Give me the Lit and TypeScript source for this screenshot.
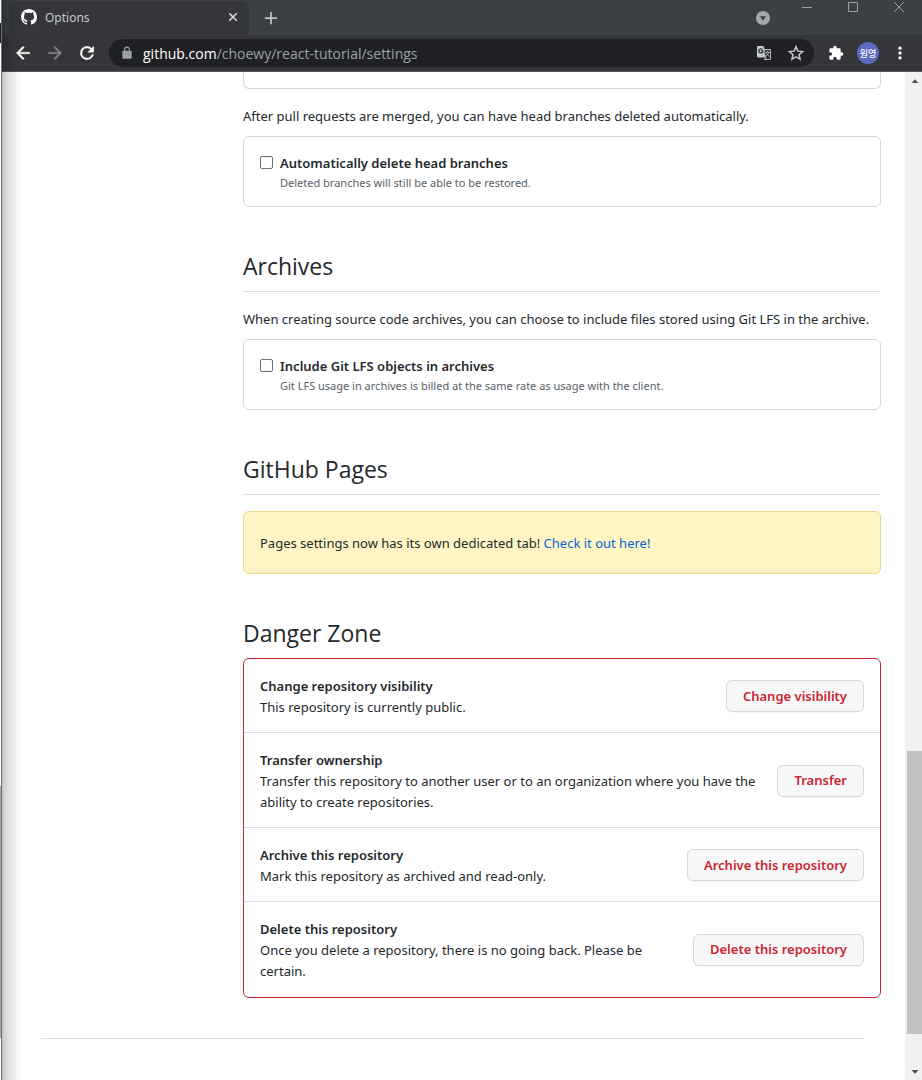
import { LitElement, html, css, svg } from "lit";
import { customElement, property } from "lit/decorators.js";

const icons = {
  github: svg`<path d="M8 0C3.58 0 0 3.58 0 8c0 3.54 2.29 6.53 5.47 7.59.4.07.55-.17.55-.38 0-.19-.01-.82-.01-1.49-2.01.37-2.53-.49-2.69-.94-.09-.23-.48-.94-.82-1.13-.28-.15-.68-.52-.01-.53.63-.01 1.08.58 1.23.82.72 1.21 1.87.87 2.33.66.07-.52.28-.87.51-1.07-1.78-.2-3.64-.89-3.64-3.95 0-.87.31-1.59.82-2.15-.08-.2-.36-1.02.08-2.12 0 0 .67-.21 2.2.82.64-.18 1.32-.27 2-.27s1.36.09 2 .27c1.53-1.04 2.2-.82 2.2-.82.44 1.1.16 1.92.08 2.12.51.56.82 1.27.82 2.15 0 3.07-1.87 3.75-3.65 3.95.29.25.54.73.54 1.48 0 1.07-.01 1.93-.01 2.2 0 .21.15.46.55.38A8.01 8.01 0 0 0 16 8c0-4.42-3.58-8-8-8z"/>`,
  back: svg`<path d="M20 11H7.83l5.59-5.59L12 4l-8 8 8 8 1.41-1.41L7.83 13H20z" stroke="currentColor" stroke-width=".5"/>`,
  forward: svg`<path d="M12 4l-1.41 1.41L16.17 11H4v2h12.17l-5.58 5.59L12 20l8-8z" stroke="currentColor" stroke-width=".5"/>`,
  reload: svg`<path d="M17.65 6.35A7.96 7.96 0 0 0 12 4a8 8 0 1 0 7.73 10h-2.08A6 6 0 1 1 12 6c1.66 0 3.14.69 4.22 1.78L13 11h7V4z" stroke="currentColor" stroke-width=".5"/>`,
  lock: svg`<path d="M18 8h-1V6A5 5 0 0 0 7 6v2H6a2 2 0 0 0-2 2v10c0 1.100.9 2 2 2h12a2 2 0 0 0 2-2V10a2 2 0 0 0-2-2zM8.900 8V6a3.100 3.100 0 0 1 6.200 0v2z"/>`,
  star: svg`<path d="M12 3.600l2.500 5.900 6.300.5-4.800 4.200 1.500 6.200-5.500-3.300-5.500 3.300L8 14.200 3.200 10l6.300-.5z" fill="none" stroke="currentColor" stroke-width="2"/>`,
  puzzle: svg`<path d="M20.500 11H19V7a2 2 0 0 0-2-2h-4V3.500a2.500 2.500 0 0 0-5 0V5H4a2 2 0 0 0-2 2v3.800h1.500a2.700 2.700 0 0 1 0 5.400H2V20a2 2 0 0 0 2 2h3.800v-1.500a2.700 2.700 0 0 1 5.400 0V22H17a2 2 0 0 0 2-2v-4h1.500a2.500 2.500 0 0 0 0-5z"/>`,
  menu: svg`<circle cx="8" cy="2.500" r="1.900"/><circle cx="8" cy="8" r="1.900"/><circle cx="8" cy="13.500" r="1.900"/>`,
  translate: svg`<path d="M1.500 1h6l1.200 3.500 2 8H2a1 1 0 0 1-1-1V2z"/><path d="M8.500 4.500h5.900v9.900H8.300l2.400-2.200" fill="none" stroke="currentColor"/><path d="M7.200 5.700H4.900M7 5.800A2.100 2.100 0 1 1 6.300 4.300" fill="none" stroke="#202124" stroke-width="1.100"/><path d="M8.700 6.500l1.800 6" fill="none" stroke="#202124" stroke-width=".8"/><path d="M9.300 7h4.200M11.400 6v1M12.900 7c-.4 1.700-1.400 2.900-2.700 3.800M10.300 8l2.800 3.600" fill="none" stroke="currentColor" stroke-width=".9"/>`,
  cross: svg`<path d="M3 3l10 10M13 3L3 13" fill="none" stroke="currentColor" stroke-width="2.200"/>`,
  plus: svg`<path d="M8 1v14M1 8h14" fill="none" stroke="currentColor" stroke-width="2"/>`,
  chevron: svg`<circle cx="8" cy="8" r="8"/><path d="M4.500 6h7L8 11z" fill="#3c4043"/>`,
  minimize: svg`<path d="M3 7.500h10" fill="none" stroke="currentColor"/>`,
  maximize: svg`<path d="M3.500 2.500h9v9h-9z" fill="none" stroke="currentColor"/>`,
  close: svg`<path d="M3 2l10 10M13 2L3 12" fill="none" stroke="currentColor"/>`,
  up: svg`<path d="M4.500 10h7L8 6.200z"/>`,
  down: svg`<path d="M4.500 6h7L8 9.800z"/>`,
};

const icon = (name: keyof typeof icons, size = 16, box = 16) =>
  html`<svg width=${size} height=${size} viewBox="0 0 ${box} ${box}" fill="currentColor" aria-hidden="true">${icons[name]}</svg>`;

const reset = css`
  * { box-sizing: border-box; }
  svg { display: block; flex: none; }
  button { font: inherit; color: inherit; margin: 0; padding: 0; border: 0; background: none; }
`;

@customElement("browser-chrome")
export class BrowserChrome extends LitElement {
  static styles = [reset, css`
    :host { display: block; background: #35363a; border-bottom: 1px solid #58585d; color: #fff; }
    .strip { display: flex; height: 35px; padding-left: 7px; background: #3c4043; color: #9aa0a6; }
    .tab { display: flex; align-items: center; width: 240px; margin-top: 1px; padding: 0 10px 2px 12px; gap: 8px; border-radius: 8px 8px 0 0; background: #35363a; color: #fff; }
    .name { flex: 1; font-size: 12px; color: #c4c7cb; }
    .tab button { color: #d5d7da; }
    .new { display: grid; place-items: center; width: 44px; color: #bdc1c6; }
    .spacer { flex: 1; }
    .search { display: grid; place-items: center; width: 42px; color: #a5a9ad; }
    .controls { display: flex; height: 15px; }
    .controls button { display: grid; place-items: center; width: 46px; }
    .toolbar { display: flex; align-items: center; height: 36px; padding: 0 6px 0 5px; }
    .tool { display: grid; place-items: center; flex: none; width: 32px; height: 28px; }
    .dim { color: #808286; }
    .omnibox { display: flex; align-items: center; flex: 1; min-width: 0; height: 28px; margin: 0 6px; padding: 0 2px 0 11px; gap: 9px; border-radius: 14px; background: #202124; color: #c4c7cb; }
    .lock { color: #9aa0a6; }
    .url { flex: 1; min-width: 0; overflow: hidden; white-space: nowrap; font-family: "Open Sans", sans-serif; font-size: 14px; color: #9aa0a6; }
    .host { color: #fff; }
    .actions { display: flex; }
    .avatar { display: grid; place-items: center; width: 22px; height: 22px; border-radius: 50%; background: #5c6bc0; font: 500 9px/1 "Noto Sans CJK KR", sans-serif; }
  `];

  render() {
    return html`
      <div class="strip">
        <div class="tab">
          ${icon("github")}
          <span class="name">Options</span>
          <button aria-label="Close tab">${icon("cross", 12)}</button>
        </div>
        <button class="new" aria-label="New tab">${icon("plus", 14)}</button>
        <span class="spacer"></span>
        <button class="search" aria-label="Search tabs">${icon("chevron", 14)}</button>
        <div class="controls">
          <button aria-label="Minimize">${icon("minimize")}</button>
          <button aria-label="Maximize">${icon("maximize")}</button>
          <button aria-label="Close">${icon("close")}</button>
        </div>
      </div>
      <div class="toolbar">
        <button class="tool" aria-label="Back">${icon("back", 20, 24)}</button>
        <button class="tool dim" aria-label="Forward">${icon("forward", 20, 24)}</button>
        <button class="tool" aria-label="Reload">${icon("reload", 20, 24)}</button>
        <div class="omnibox">
          <span class="lock">${icon("lock", 14, 24)}</span>
          <div class="url" role="textbox" contenteditable="true" spellcheck="false" aria-label="Address"><span class="host">github.com</span>/choewy/react-tutorial/settings</div>
          <div class="actions">
            <button class="tool" aria-label="Translate">${icon("translate")}</button>
            <button class="tool" aria-label="Bookmark">${icon("star", 18, 24)}</button>
          </div>
        </div>
        <button class="tool" aria-label="Extensions">${icon("puzzle", 16, 24)}</button>
        <button class="tool" aria-label="Profile"><span class="avatar">원영</span></button>
        <button class="tool" aria-label="Menu">${icon("menu", 14)}</button>
      </div>`;
  }
}

@customElement("option-box")
export class OptionBox extends LitElement {
  @property() name = "";
  @property() note = "";

  static styles = [reset, css`
    :host { display: flex; gap: 7px; padding: 16px 16px 14px; border: 1px solid #d0d7de; border-radius: 6px; }
    .check { appearance: none; flex: none; width: 13px; height: 13px; margin: 3px 0 0; border: 1px solid #6e6e6e; border-radius: 2px; background: #fff; }
    .check:checked { background: #0366d6; }
    .label { display: block; line-height: 21px; font-weight: 600; }
    .note { margin: 0; font-size: 11px; line-height: 18px; color: #586069; }
  `];

  render() {
    return html`
      <input class="check" id="option" type="checkbox" aria-describedby="note">
      <div>
        <label class="label" for="option">${this.name}</label>
        <p class="note" id="note">${this.note}</p>
      </div>`;
  }
}

const actions = [
  { title: "Change repository visibility", text: "This repository is currently public.", button: "Change visibility" },
  { title: "Transfer ownership", text: "Transfer this repository to another user or to an organization where you have the ability to create repositories.", button: "Transfer" },
  { title: "Archive this repository", text: "Mark this repository as archived and read-only.", button: "Archive this repository" },
  { title: "Delete this repository", text: "Once you delete a repository, there is no going back. Please be certain.", button: "Delete this repository" },
];

@customElement("danger-zone")
export class DangerZone extends LitElement {
  static styles = [reset, css`
    :host { display: block; border: 1px solid #cb2431; border-radius: 6px; }
    .list { margin: 0; padding: 0; list-style: none; }
    .row { display: flex; align-items: center; gap: 16px; padding: 15px 16px 14px; border-top: 1px solid #d8dee4; }
    .row:first-child { border-top: 0; }
    .row:last-child { padding-bottom: 15px; }
    .copy { flex: 1; min-width: 0; padding-top: 2px; }
    .title { display: block; font-weight: 600; }
    .text { margin: 0; }
    .action { flex: none; height: 32px; padding: 0 16px; border: 1px solid #d5d8da; border-radius: 6px; background: #f6f8fa; box-shadow: 0 1px 0 rgba(27, 31, 35, 0.04); font-weight: 600; color: #cb2431; }
  `];

  render() {
    return html`
      <ul class="list">
        ${actions.map((a) => html`
          <li class="row">
            <div class="copy">
              <strong class="title">${a.title}</strong>
              <p class="text">${a.text}</p>
            </div>
            <button class="action">${a.button}</button>
          </li>`)}
      </ul>`;
  }
}

@customElement("page-scrollbar")
export class PageScrollbar extends LitElement {
  static styles = [reset, css`
    :host { display: grid; grid-template-rows: 17px 662fr 283fr 29fr 17px; width: 17px; padding: 0 2px; background: #f1f1f1; color: #505050; }
    .arrow { display: grid; place-items: center; }
    .thumb { grid-row: 3; background: #c1c1c1; }
    .end { grid-row: 5; }
  `];

  render() {
    return html`
      <button class="arrow" aria-label="Scroll up">${icon("up")}</button>
      <div class="thumb"></div>
      <button class="arrow end" aria-label="Scroll down">${icon("down")}</button>`;
  }
}

@customElement("app-root")
export class AppRoot extends LitElement {
  static styles = [reset, css`
    :host { display: flex; min-height: 100vh; background: #fff; color: #24292e; font: 13px/21px "Noto Sans", "Open Sans", sans-serif; }
    .edge { width: 1px; background: linear-gradient(#fff 23px, #202124 23px 43px, #fff 43px 786px, #a6a6a6 786px 1038px, #fff 1038px); }
    .window { position: relative; display: flex; flex-direction: column; flex: 1; min-width: 0; border-left: 1px solid #6e7173; }
    .shade { position: absolute; inset: 0 auto 0 0; width: 20px; background: linear-gradient(90deg, rgba(0, 0, 0, 0.24), rgba(0, 0, 0, 0.15) 20%, rgba(0, 0, 0, 0.07) 55%, rgba(0, 0, 0, 0.01) 90%, transparent); pointer-events: none; }
    .view { display: flex; flex: 1; }
    .page { flex: 1; min-width: 0; }
    .layout { display: grid; grid-template-columns: 193px minmax(0, 1fr); gap: 24px; padding: 0 24px; }
    .content { grid-column: 2; }
    .previous { height: 17px; margin-bottom: 17px; border: 1px solid #d0d7de; border-top: 0; border-radius: 0 0 6px 6px; }
    .intro { margin: 0 0 9px; }
    .section { margin-top: 40px; }
    .heading { margin: 0; padding-bottom: 6px; font-family: "Open Sans", sans-serif; font-size: 23px; line-height: 38px; font-weight: 400; }
    .ruled { margin-bottom: 16px; border-bottom: 1px solid #d8dee4; }
    .ruled + .intro { margin-top: 17px; }
    .flash { padding: 21px 16px 19px; border: 1px solid #e9d88a; border-radius: 6px; background: #fff5c4; }
    .link { color: #0366d6; text-decoration: none; }
    .footer { margin: 40px 40px 0 39px; border-top: 1px solid #d8dee4; }
  `];

  private section(title: string, body: unknown, ruled = true) {
    return html`
      <section class="section">
        <h2 class="heading ${ruled ? "ruled" : ""}">${title}</h2>
        ${body}
      </section>`;
  }

  render() {
    return html`
      <div class="edge"></div>
      <div class="window">
        <browser-chrome></browser-chrome>
        <div class="view">
          <div class="page">
            <div class="layout">
              <main class="content">
                <div class="previous"></div>
                <p class="intro">After pull requests are merged, you can have head branches deleted automatically.</p>
                <option-box name="Automatically delete head branches" note="Deleted branches will still be able to be restored."></option-box>
                ${this.section("Archives", html`
                  <p class="intro">When creating source code archives, you can choose to include files stored using Git LFS in the archive.</p>
                  <option-box name="Include Git LFS objects in archives" note="Git LFS usage in archives is billed at the same rate as usage with the client."></option-box>`)}
                ${this.section("GitHub Pages", html`
                  <div class="flash">Pages settings now has its own dedicated tab! <a class="link" href="#pages">Check it out here!</a></div>`)}
                ${this.section("Danger Zone", html`<danger-zone></danger-zone>`, false)}
              </main>
            </div>
            <footer class="footer"></footer>
          </div>
          <page-scrollbar></page-scrollbar>
        </div>
        <div class="shade"></div>
      </div>`;
  }
}
